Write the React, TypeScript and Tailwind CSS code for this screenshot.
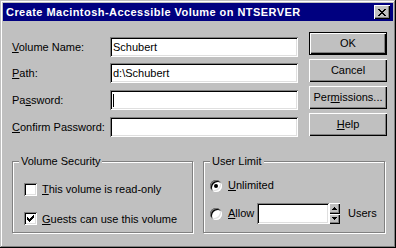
import type { ReactNode } from 'react';

const sunken =
  'bg-white shadow-[inset_1px_1px_0_#808080,inset_-1px_-1px_0_#fff,inset_2px_2px_0_#000,inset_-2px_-2px_0_#dfdfdf]';
const raised = 'bg-[#c0c0c0] shadow-[inset_1px_1px_0_#fff,inset_-1px_-1px_0_#000,inset_-2px_-2px_0_#808080]';

// tiny pixel-art drawer: each '#' in a row is one black pixel
const Pixels = ({ rows, className = '' }: { rows: string[]; className?: string }) => (
  <svg
    width={rows[0].length}
    height={rows.length}
    viewBox={`0 0 ${rows[0].length} ${rows.length}`}
    shapeRendering="crispEdges"
    className={className}
  >
    {rows.flatMap((r, y) =>
      r.split('').map((c, x) => (c === '#' ? <rect key={`${x}-${y}`} x={x} y={y} width={1} height={1} fill="#000" /> : null)),
    )}
  </svg>
);

const closeX = ['##....##', '.##..##.', '..####..', '...##...', '..####..', '.##..##.', '##....##'];
const check = ['......#', '.....##', '#...###', '##.###.', '#####..', '.###...', '..#....'];

const Field = ({ value, caret }: { value?: string; caret?: boolean }) => (
  <div className={`h-[20px] w-[188px] flex items-center pl-[3px] ${sunken}`}>
    {value}
    {caret && <span className="w-px h-[13px] bg-black" />}
  </div>
);

const Row = ({ label, value, caret, className = '' }: { label: ReactNode; value?: string; caret?: boolean; className?: string }) => (
  <div className={`flex items-center ${className}`}>
    <div className="w-[98px]">{label}</div>
    <Field value={value} caret={caret} />
  </div>
);

const Button = ({ children, isDefault }: { children: ReactNode; isDefault?: boolean }) => (
  <div
    className={`h-[23px] w-[78px] flex items-center justify-center ${raised} ${isDefault ? 'border border-black' : ''}`}
  >
    {children}
  </div>
);

const Group = ({ title, className, children }: { title: string; className: string; children: ReactNode }) => (
  <div
    className={`relative h-[72px] border border-[#808080] shadow-[inset_1px_1px_0_#fff,1px_1px_0_#fff] ${className}`}
  >
    <span className="absolute -top-[8px] left-[6px] px-[2px] bg-[#c0c0c0] leading-[14px]">{title}</span>
    {children}
  </div>
);

const Checkbox = ({ checked }: { checked?: boolean }) => (
  <div className={`w-[13px] h-[13px] flex items-center justify-center ${sunken}`}>
    {checked && <Pixels rows={check} />}
  </div>
);

const Radio = ({ on }: { on?: boolean }) => (
  <div className="w-[12px] h-[12px] rounded-full bg-white flex items-center justify-center shadow-[inset_1px_1px_0_#808080,inset_-1px_-1px_0_#fff,inset_2px_2px_0_#000,inset_-2px_-2px_0_#dfdfdf]">
    {on && <div className="w-[4px] h-[4px] rounded-full bg-black" />}
  </div>
);

export default function App() {
  return (
    <div className="w-[396px] h-[248px] bg-[#c0c0c0] p-[3px] flex flex-col text-[11px] text-black font-['Liberation_Sans',Arial,sans-serif] shadow-[inset_-1px_-1px_0_#000,inset_1px_1px_0_#c0c0c0,inset_-2px_-2px_0_#808080,inset_2px_2px_0_#fff]">
      <div className="h-[18px] bg-[#000080] flex items-center pl-[3px] pr-[3px]">
        <span className="text-white font-bold tracking-[0.45px]">Create Macintosh-Accessible Volume on NTSERVER</span>
        <div className={`ml-auto w-[16px] h-[14px] flex items-center justify-center ${raised}`}>
          <Pixels rows={closeX} />
        </div>
      </div>

      <div className="flex flex-col pl-[9px] pt-[11px]">
        <div className="flex">
          <div className="flex flex-col pt-[5px]">
            <Row label={<><u>V</u>olume Name:</>} value="Schubert" />
            <Row label={<><u>P</u>ath:</>} value="d:\Schubert" className="mt-[6px]" />
            <Row label={<>Pa<u>s</u>sword:</>} caret className="mt-[7px]" />
            <Row label={<><u>C</u>onfirm Password:</>} className="mt-[7px]" />
          </div>
          <div className="ml-[11px] flex flex-col gap-[4px]">
            <Button isDefault>OK</Button>
            <Button>Cancel</Button>
            <Button>
              Per<u>m</u>issions...
            </Button>
            <Button>
              <u>H</u>elp
            </Button>
          </div>
        </div>

        <div className="flex mt-[24px]">
          <Group title="Volume Security" className="w-[181px]">
            <div className="flex flex-col gap-[13px] pt-[19px] pl-[11px]">
              <div className="flex items-center gap-[5px]">
                <Checkbox />
                <span>
                  <u>T</u>his volume is read-only
                </span>
              </div>
              <div className="flex items-center gap-[5px]">
                <Checkbox checked />
                <span>
                  <u>G</u>uests can use this volume
                </span>
              </div>
            </div>
          </Group>

          <Group title="User Limit" className="w-[182px] ml-[10px]">
            <div className="flex flex-col gap-[7px] pt-[13px] pl-[6px]">
              <div className="h-[21px] flex items-center gap-[6px]">
                <Radio on />
                <span>
                  <u>U</u>nlimited
                </span>
              </div>
              <div className="h-[21px] flex items-center">
                <Radio />
                <span className="ml-[6px] w-[29px]">
                  <u>A</u>llow
                </span>
                <div className={`h-[21px] w-[72px] ${sunken}`} />
                <div className="flex flex-col h-[21px] w-[11px]">
                  <div className={`flex-1 flex items-center justify-center ${raised}`}>
                    <Pixels rows={['..#..', '.###.', '#####']} />
                  </div>
                  <div className={`flex-1 flex items-center justify-center ${raised}`}>
                    <Pixels rows={['#####', '.###.', '..#..']} />
                  </div>
                </div>
                <span className="ml-[8px]">Users</span>
              </div>
            </div>
          </Group>
        </div>
      </div>
    </div>
  );
}
